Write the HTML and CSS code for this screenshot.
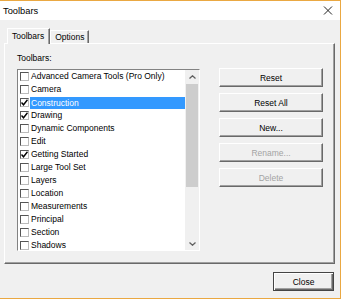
FILE: index.html
```html
<!DOCTYPE html>
<html lang="en">
<head>
    <meta charset="UTF-8">
    <title>Toolbars</title>
    <link rel="stylesheet" href="styles.css">
</head>
<body>
    <div class="window">
        <div class="titlebar">
            <span class="title">Toolbars</span>
            <svg class="close-x" width="10" height="9" viewBox="0 0 10 9">
                <path d="M1 0.5 L9 8.5 M9 0.5 L1 8.5" stroke="#222" stroke-width="1" fill="none"/>
            </svg>
        </div>

        <div class="content">
            <!-- tabs -->
            <div class="tabs">
                <div class="tab active">Toolbars</div>
                <div class="tab">Options</div>
            </div>

            <div class="panel">
                <div class="list-col">
                    <div class="label">Toolbars:</div>
                    <div class="listbox">
                        <div class="rows">
                            <div class="row"><span class="check"></span><span class="name">Advanced Camera Tools (Pro Only)</span></div>
                            <div class="row"><span class="check"></span><span class="name">Camera</span></div>
                            <div class="row selected"><span class="check on"><svg width="7" height="7" viewBox="0 0 7 7"><path d="M0.5 3.5 L2.5 5.8 L6.5 0.8" stroke="#000" stroke-width="1.4" fill="none"/></svg></span><span class="name">Construction</span></div>
                            <div class="row"><span class="check on"><svg width="7" height="7" viewBox="0 0 7 7"><path d="M0.5 3.5 L2.5 5.8 L6.5 0.8" stroke="#000" stroke-width="1.4" fill="none"/></svg></span><span class="name">Drawing</span></div>
                            <div class="row"><span class="check"></span><span class="name">Dynamic Components</span></div>
                            <div class="row"><span class="check"></span><span class="name">Edit</span></div>
                            <div class="row"><span class="check on"><svg width="7" height="7" viewBox="0 0 7 7"><path d="M0.5 3.5 L2.5 5.8 L6.5 0.8" stroke="#000" stroke-width="1.4" fill="none"/></svg></span><span class="name">Getting Started</span></div>
                            <div class="row"><span class="check"></span><span class="name">Large Tool Set</span></div>
                            <div class="row"><span class="check"></span><span class="name">Layers</span></div>
                            <div class="row"><span class="check"></span><span class="name">Location</span></div>
                            <div class="row"><span class="check"></span><span class="name">Measurements</span></div>
                            <div class="row"><span class="check"></span><span class="name">Principal</span></div>
                            <div class="row"><span class="check"></span><span class="name">Section</span></div>
                            <div class="row"><span class="check"></span><span class="name">Shadows</span></div>
                        </div>
                        <div class="scrollbar">
                            <div class="arrow">
                                <svg width="7" height="4" viewBox="0 0 7 4"><path d="M0.5 3.5 L3.5 0.8 L6.5 3.5" stroke="#606060" stroke-width="1.3" fill="none"/></svg>
                            </div>
                            <div class="track">
                                <div class="thumb"></div>
                            </div>
                            <div class="arrow">
                                <svg width="7" height="4" viewBox="0 0 7 4"><path d="M0.5 0.5 L3.5 3.2 L6.5 0.5" stroke="#606060" stroke-width="1.3" fill="none"/></svg>
                            </div>
                        </div>
                    </div>
                </div>

                <div class="button-col">
                    <button class="btn">Reset</button>
                    <button class="btn">Reset All</button>
                    <button class="btn">New...</button>
                    <button class="btn" disabled>Rename...</button>
                    <button class="btn" disabled>Delete</button>
                </div>
            </div>

            <div class="footer">
                <button class="btn close-btn">Close</button>
            </div>
        </div>
    </div>
</body>
</html>
```

FILE: styles.css
```css
body {
    margin: 0;
    padding: 0;
    background-color: #fff;
    font-family: "Liberation Sans", Arial, sans-serif;
    font-size: 8.5px;
    color: #000;
}
.window {
    width: 340px;
    height: 297px;
    border-top: 1px solid #eaa842;
    border-right: 1px solid #eaa842;
    border-bottom: 1px solid #eaa842;
    display: flex;
    flex-direction: column;
}
.titlebar {
    height: 19px;
    background-color: #fff;
    display: flex;
    align-items: center;
    justify-content: space-between;
    padding: 0 7px 0 3px;
}
.title {
    font-size: 9.3px;
}
.close-x {
    display: block;
}
.content {
    flex: 1;
    background-color: #f0f0f0;
    padding-left: 4px;
}
.tabs {
    display: flex;
    align-items: flex-end;
    height: 15px;
    margin-top: 8px;
    padding-left: 3px;
}
.tab {
    height: 12px;
    line-height: 12px;
    padding: 0 4px 0 4px;
    border-top: 1px solid #fff;
    border-left: 1px solid #fff;
    border-right: 1px solid #696969;
    box-shadow: inset -1px 0 0 #a0a0a0;
    font-size: 8.5px;
}
.tab.active {
    height: 15px;
    line-height: 14px;
    padding: 0 5px 0 4px;
    margin-bottom: -1px;
    background-color: #f0f0f0;
    position: relative;
    z-index: 1;
}
.panel {
    width: 329px;
    height: 219px;
    border-top: 1px solid #fff;
    border-left: 1px solid #fff;
    border-right: 1px solid #696969;
    border-bottom: 1px solid #696969;
    box-shadow: inset -1px -1px 0 #a0a0a0;
    display: flex;
    padding-left: 12px;
    box-sizing: border-box;
    width: 331px;
    height: 221px;
}
.label {
    margin-top: 8px;
    height: 12px;
    line-height: 12px;
    margin-bottom: 5px;
}
.listbox {
    width: 183px;
    height: 182px;
    box-sizing: border-box;
    border-top: 1px solid #828282;
    border-left: 1px solid #828282;
    border-right: 1px solid #fff;
    border-bottom: 1px solid #fff;
    background-color: #fff;
    display: flex;
    overflow: hidden;
}
.rows {
    flex: 1;
    overflow: hidden;
}
.row {
    height: 13px;
    display: flex;
    align-items: center;
    padding-left: 2px;
}
.check {
    width: 9px;
    height: 9px;
    box-sizing: border-box;
    border-top: 1px solid #555;
    border-left: 1px solid #555;
    border-right: 1px solid #bbb;
    border-bottom: 1px solid #bbb;
    background-color: #fff;
    margin-right: 1px;
    display: flex;
    align-items: center;
    justify-content: center;
    flex-shrink: 0;
}
.check svg {
    display: block;
}
.name {
    flex: 1;
    height: 13px;
    line-height: 13px;
    padding-left: 1px;
    white-space: nowrap;
}
.row.selected .name {
    background-color: #3399ff;
    color: #fff;
    height: 12px;
    line-height: 12px;
}
.scrollbar {
    width: 14px;
    background-color: #f0f0f0;
    display: flex;
    flex-direction: column;
}
.arrow {
    height: 13px;
    display: flex;
    align-items: center;
    justify-content: center;
}
.arrow svg {
    display: block;
}
.track {
    flex: 1;
    padding: 1px 1px;
}
.thumb {
    height: 103px;
    background-color: #cdcdcd;
}
.button-col {
    display: flex;
    flex-direction: column;
    gap: 6px;
    margin-left: 19px;
    padding-top: 24px;
}
.btn {
    width: 104px;
    height: 19px;
    box-sizing: border-box;
    background-color: #f0f0f0;
    border-top: 1px solid #fff;
    border-left: 1px solid #fff;
    border-right: 1px solid #696969;
    border-bottom: 1px solid #696969;
    box-shadow: inset -1px -1px 0 #a0a0a0;
    font-family: "Liberation Sans", Arial, sans-serif;
    font-size: 8.5px;
    color: #000;
    padding: 0;
}
.btn:disabled {
    color: #a3a3a3;
}
.footer {
    display: flex;
    justify-content: flex-end;
    padding-right: 6px;
    margin-top: 8px;
}
.close-btn {
    width: 61px;
    border: 1px solid #444;
    box-shadow: inset 1px 1px 0 #fff, inset -1px -1px 0 #696969, inset -2px -2px 0 #a0a0a0;
}
```
